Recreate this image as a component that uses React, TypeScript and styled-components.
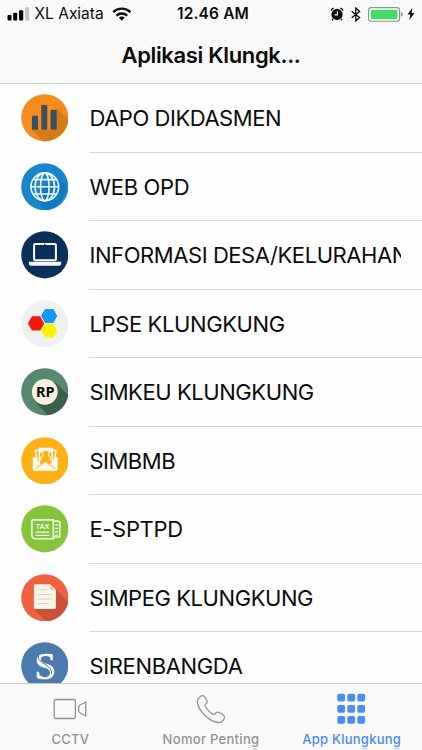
import React from 'react';
import styled, { createGlobalStyle } from 'styled-components';

const GlobalStyle = createGlobalStyle`
  * { box-sizing: border-box; }
  html, body { margin: 0; padding: 0; overflow: hidden; background: #fefefe; }
`;

const Screen = styled.main`
  width: 422px;
  height: 750px;
  display: flex;
  flex-direction: column;
  overflow: hidden;
  background: #fefefe;
  color: #0c0c0c;
  font-family: Inter, 'Liberation Sans', sans-serif;
`;

const Header = styled.header`
  flex: none;
  height: 84px;
  background: #f9f9f9;
  border-bottom: 1px solid #d2d2d2;
`;

const StatusBar = styled.div`
  display: grid;
  grid-template-columns: 177px 1fr auto;
  align-items: center;
  height: 28px;
  padding-right: 7px;
  line-height: 20px;
`;

const Carrier = styled.div`
  display: flex;
  align-items: center;
  padding-left: 7px;
  font-size: 15.5px;
  letter-spacing: 0;
  white-space: nowrap;

  span { margin: 0 8px 0 4.5px; }
`;

const Clock = styled.div`
  font-size: 15.5px;
  font-weight: 600;
  letter-spacing: 0.15px;
  white-space: nowrap;
`;

const StatusIcons = styled.div`
  display: flex;
  align-items: center;
`;

const Gap = styled.span<{ $width: number }>`
  width: ${(p) => p.$width}px;
`;

const Title = styled.h1`
  margin: 12px 0 0;
  text-align: center;
  font-size: 22px;
  line-height: 30px;
  font-weight: 600;
  letter-spacing: -0.35px;
`;

const List = styled.ul`
  flex: 1;
  min-height: 0;
  margin: 0;
  padding: 0;
  list-style: none;
  overflow: hidden;
`;

const Row = styled.li`
  display: flex;
  height: 68.5px;
  padding-left: 20.7px;
`;

const Badge = styled.svg`
  flex: none;
  width: 47.6px;
  height: 47.6px;
  margin-top: 10px;
`;

const RowBody = styled.div`
  flex: 1;
  min-width: 0;
  margin-left: 20.7px;
  padding-right: 21px;
  border-bottom: 1px solid #d9d9d9;
`;

const RowLabel = styled.div<{ $spacing: number }>`
  overflow: hidden;
  white-space: nowrap;
  font-size: 22px;
  line-height: 68px;
  padding-left: 0.5px;
  letter-spacing: ${(p) => p.$spacing}px;
`;

const TabBar = styled.nav`
  flex: none;
  position: relative;
  display: grid;
  grid-template-columns: repeat(3, 1fr);
  height: 67px;
  background: #f9f9f9;
  border-top: 1px solid #c8c8c8;
`;

const Tab = styled.div<{ $active?: boolean; $spacing: number }>`
  display: flex;
  flex-direction: column;
  align-items: center;
  color: ${(p) => (p.$active ? '#4a89f3' : '#929292')};
  font-size: 13px;
  line-height: 16px;
  font-weight: 500;
  letter-spacing: ${(p) => p.$spacing}px;
  white-space: nowrap;

  svg { margin: 7px 0 4px; }
`;

const EdgeMark = styled.i<{ $left: number; $width: number; $color: string }>`
  position: absolute;
  bottom: 0;
  left: ${(p) => p.$left}px;
  width: ${(p) => p.$width}px;
  height: 2px;
  background: ${(p) => p.$color};
  opacity: 0.45;
`;

const hexagon = (cx: number, cy: number, r: number) =>
  [0, 1, 2, 3, 4, 5]
    .map((i) => {
      const a = (Math.PI / 3) * i;
      return `${(cx + r * Math.cos(a)).toFixed(2)},${(cy + r * Math.sin(a)).toFixed(2)}`;
    })
    .join(' ');

const ChartArt = () => (
  <>
    <circle cx="24" cy="24" r="23.8" fill="#f68b1f" />
    <path d="M11 36 L22 47.5 A24 24 0 0 0 47.8 25 L36 14.5 L34 36Z" fill="#d67a1b" />
    <rect x="11" y="22" width="6.2" height="14" rx="1" fill="#3c505f" />
    <rect x="20.5" y="11" width="6" height="25" rx="1" fill="#3c505f" />
    <rect x="29.8" y="16" width="6.2" height="20" rx="1" fill="#3c505f" />
  </>
);

const GlobeArt = () => (
  <>
    <circle cx="24" cy="24" r="23.8" fill="#1785c9" />
    <path d="M34 13 L45 23 A24 24 0 0 1 24 47.8 L14 35Z" fill="#0f7abf" />
    <g fill="none" stroke="#f2faff" strokeWidth="1.6">
      <circle cx="24" cy="24" r="14" />
      <ellipse cx="24" cy="24" rx="9.8" ry="14" />
      <ellipse cx="24" cy="24" rx="4.3" ry="14" />
      <path d="M10 24h28M12 16.8h24M12 31.2h24" />
    </g>
  </>
);

const LaptopArt = () => (
  <>
    <circle cx="24" cy="24" r="23.8" fill="#0b2f5b" />
    <rect x="13.2" y="13.2" width="22" height="16.2" rx="1" fill="none" stroke="#fff" strokeWidth="2" />
    <circle cx="24" cy="13.6" r="0.8" fill="#0b2f5b" />
    <path d="M8 31h32.5v2q0 2-2.3 2H10.3Q8 35 8 33z" fill="#f5f9ff" />
  </>
);

const HexArt = () => (
  <>
    <circle cx="24" cy="24" r="23.8" fill="#f0f0f0" />
    <polygon points={hexagon(28.4, 16.1, 8.2)} fill="#119af5" />
    <polygon points={hexagon(28.4, 31, 8.2)} fill="#fff200" />
    <polygon points={hexagon(15.2, 23.6, 8.2)} fill="#fa1604" />
  </>
);

const RupiahArt = () => (
  <>
    <circle cx="24" cy="24" r="23.8" fill="#568970" />
    <path d="M14 34 L27 47.6 A24 24 0 0 0 47.5 27 L34 14Z" fill="#38604d" />
    <circle cx="24" cy="24" r="13" fill="#f6f1dc" />
    <text x="24.5" y="29" textAnchor="middle" fontFamily="'Noto Sans', sans-serif" fontSize="14.6" fontWeight="700" fill="#080808">RP</text>
  </>
);

const MoneyMailArt = () => (
  <>
    <circle cx="24" cy="24" r="23.8" fill="#fcb116" />
    <g fill="none" stroke="#fffaf0" strokeWidth="1.5">
      <path d="M16.6 25.5 14.4 13.8 19 12.8M31 12.8l4.3 1-2.2 11.7" />
      <path d="M18.5 27V11.6h13V27" />
    </g>
    <path d="M19 12h12v4.2c-2 0-2.7-2.1-6-2.1s-4 2.1-6 2.1z" fill="#fffaf0" />
    <path d="M20 24v-3l2-2v-3.5M30 24v-3l-2-2v-3.5" fill="none" stroke="#fffaf0" strokeWidth="1.1" />
    <path d="M12 20.5h3l.8 4 5 3.1L24.5 24l4.2 3.6 5-3.1.8-4H37v12.1q0 1.4-1.4 1.4H13.3q-1.5 0-1.5-1.4V20.5z" fill="#fffaf0" />
    <path d="M14 32.3 24.6 25l10.4 7.3" fill="none" stroke="#fcb116" strokeWidth="0.9" />
  </>
);

const TaxArt = () => (
  <>
    <circle cx="24" cy="24" r="23.8" fill="#86c43e" />
    <g fill="none" stroke="#f1fbe5" strokeWidth="1.6">
      <path d="M13 15h19.6v19H14.5q-3.5-.4-3.5-3.8V17q0-2 2-2z" />
      <path d="M32.6 16.3h4.5q2 0 2 2v14h-6.5" />
      <path d="M14.5 27.3h14M14.5 30.7h14M34.4 20h3M34.4 23.5h3M34.4 27h3M34.4 30.3h3" strokeWidth="1.3" />
    </g>
    <text x="21.7" y="24.4" textAnchor="middle" fontFamily="'Liberation Sans', sans-serif" fontSize="7.2" fontWeight="700" fill="#f1fbe5">TAX</text>
  </>
);

const DocumentArt = () => (
  <>
    <circle cx="24" cy="24" r="23.8" fill="#f1603f" />
    <path d="M13 35 L25 47.6 A24 24 0 0 0 47.7 28 L35 15.5Z" fill="#ca5135" />
    <path d="M14.5 10.3H29.3L35.2 16v17.8q0 1.5-1.5 1.5H14.5q-1.5 0-1.5-1.5v-22q0-1.5 1.5-1.5z" fill="#fbf5e8" />
    <path d="M29.3 10.3V15q0 1.4 1.4 1.4h4.5z" fill="#d9d2c2" />
    <path d="M17 16h8.5M17 20.7h14.5M17 25.3h14.5M17 29.8h11" stroke="#d7d1c5" strokeWidth="1" />
  </>
);

const LetterArt = () => (
  <>
    <circle cx="24" cy="24" r="23.8" fill="#4c79ae" />
    <text x="24.4" y="37" textAnchor="middle" fontFamily="'Liberation Serif', serif" fontSize="39" stroke="#fff" strokeWidth="0.7" fill="#fff">S</text>
    <path d="M17.6 14c-1.8 8.2 14.4 7.8 13.4 18.5" fill="none" stroke="#4c79ae" strokeWidth="1" />
  </>
);

const apps = [
  { name: 'DAPO DIKDASMEN', Art: ChartArt, spacing: -0.46 },
  { name: 'WEB OPD', Art: GlobeArt, spacing: -0.35 },
  { name: 'INFORMASI DESA/KELURAHAN', Art: LaptopArt, spacing: -0.43 },
  { name: 'LPSE KLUNGKUNG', Art: HexArt, spacing: -0.39 },
  { name: 'SIMKEU KLUNGKUNG', Art: RupiahArt, spacing: -0.43 },
  { name: 'SIMBMB', Art: MoneyMailArt, spacing: -0.5 },
  { name: 'E-SPTPD', Art: TaxArt, spacing: -0.35 },
  { name: 'SIMPEG KLUNGKUNG', Art: DocumentArt, spacing: -0.43 },
  { name: 'SIRENBANGDA', Art: LetterArt, spacing: -0.35 },
];

const SignalIcon = () => (
  <svg width="23" height="14" viewBox="0 0 23 14">
    <rect x="0.5" y="8" width="4" height="5.5" rx="1" />
    <rect x="6.2" y="5.8" width="4" height="7.7" rx="1" />
    <rect x="12" y="3.2" width="4.2" height="10.3" rx="1" />
    <rect x="18" y="0.3" width="4.2" height="13.2" rx="1" fill="#c6c6c6" />
  </svg>
);

const WifiIcon = () => (
  <svg width="20" height="14" viewBox="0 0 20 14">
    <g fill="none" stroke="#0c0c0c" strokeWidth="2.3">
      <path d="M1.2 5.1a12.6 12.6 0 0 1 17.2 0" />
      <path d="M4.4 8.6a8 8 0 0 1 10.8 0" />
    </g>
    <path d="M6.9 10.8a4.6 4.6 0 0 1 5.8 0l-2.9 3z" />
  </svg>
);

const AlarmIcon = () => (
  <svg width="14" height="14" viewBox="0 0 14 14">
    <circle cx="7" cy="7.4" r="5.6" fill="#0c0c0c" />
    <path d="M1 3.7Q1.5 1.6 3.7 1.1M10.3 1.1Q12.5 1.6 13 3.7" fill="none" stroke="#0c0c0c" strokeWidth="1.4" />
    <path d="M3 12 2 13.3M11 12l1 1.3" stroke="#0c0c0c" strokeWidth="1.4" />
    <path d="M7.4 4.2v3.7H4.6" fill="none" stroke="#f9f9f9" strokeWidth="1.1" />
  </svg>
);

const BluetoothIcon = () => (
  <svg width="10" height="15" viewBox="0 0 10 15">
    <path d="M0.7 4.3 8.6 10.6 4.8 14V1l3.8 3.4L0.7 10.7" fill="none" stroke="#0c0c0c" strokeWidth="1.3" />
  </svg>
);

const BatteryIcon = () => (
  <svg width="36" height="15" viewBox="0 0 36 15">
    <rect x="0.6" y="0.6" width="31" height="13.6" rx="2.8" fill="#fff" stroke="#8f8f8f" strokeWidth="1.1" />
    <rect x="2.7" y="2.7" width="26.8" height="9.5" rx="1" fill="#4bd964" />
    <path d="M33 5q1.8.6 1.8 2.4T33 9.8z" fill="#8f8f8f" />
  </svg>
);

const BoltIcon = () => (
  <svg width="8" height="12" viewBox="0 0 8 12">
    <path d="M5.3 0 0.4 6.5h2.9L2.3 12l5.2-7H4.7z" fill="#0c0c0c" />
  </svg>
);

const CameraIcon = () => (
  <svg width="34" height="36" viewBox="0 0 34 36" fill="none" stroke="#929292" strokeWidth="1.3">
    <rect x="1.2" y="8.5" width="21.2" height="19" rx="1.5" />
    <path d="M32.7 11v14l-6-3.2q-1-.6-1-1.7v-4.2q0-1.1 1-1.7z" />
  </svg>
);

const PhoneIcon = () => (
  <svg width="30" height="36" viewBox="0 0 30 36" fill="none" stroke="#929292" strokeWidth="1.3">
    <path d="M4.2 5.8C1.8 7.5.9 9.5 1.4 12c1 5 4.6 9.8 8.7 13.5 4 3.6 8.6 5.8 12.4 6 2.4 0 4.7-1.7 5.7-4.1.6-1.5 0-2.7-1.2-3.7l-3.7-2.2c-1.7-.8-2.9-.3-4 1-.9 1.1-1.9 1.2-3 .5-3-1.9-5.1-4.2-6.8-7.2-.7-1.2-.5-2.2.5-3 1.4-1.1 1.6-2.4.7-4L8.4 5.7C7.2 4.1 5.8 4.5 4.2 5.8z" />
  </svg>
);

const GridIcon = () => (
  <svg width="30" height="36" viewBox="0 0 30 36" fill="#4a8cf6">
    {[2.8, 14, 25].flatMap((y) => [0.3, 10.3, 20.3].map((x) => (
      <rect key={`${x}-${y}`} x={x} y={y} width="7.8" height="7.7" rx="1.7" />
    )))}
  </svg>
);

export default function App() {
  return (
    <>
      <GlobalStyle />
      <Screen>
        <Header>
          <StatusBar>
            <Carrier><SignalIcon /><span>XL Axiata</span><WifiIcon /></Carrier>
            <Clock>12.46 AM</Clock>
            <StatusIcons>
              <AlarmIcon />
              <Gap $width={7} />
              <BluetoothIcon />
              <Gap $width={7} />
              <BatteryIcon />
              <Gap $width={3} />
              <BoltIcon />
            </StatusIcons>
          </StatusBar>
          <Title>Aplikasi Klungk...</Title>
        </Header>
        <List>
          {apps.map(({ name, Art, spacing }) => (
            <Row key={name}>
              <Badge viewBox="0 0 48 48"><Art /></Badge>
              <RowBody><RowLabel $spacing={spacing}>{name}</RowLabel></RowBody>
            </Row>
          ))}
        </List>
        <TabBar>
          <Tab $spacing={0.2}><CameraIcon />CCTV</Tab>
          <Tab $spacing={0.3}><PhoneIcon />Nomor Penting</Tab>
          <Tab $active $spacing={0.25}><GridIcon />App Klungkung</Tab>
          <EdgeMark $left={253} $width={4} $color="#8db4f5" />
          <EdgeMark $left={363} $width={4} $color="#a8a8b0" />
          <EdgeMark $left={395} $width={4} $color="#a8a8b0" />
        </TabBar>
      </Screen>
    </>
  );
}
